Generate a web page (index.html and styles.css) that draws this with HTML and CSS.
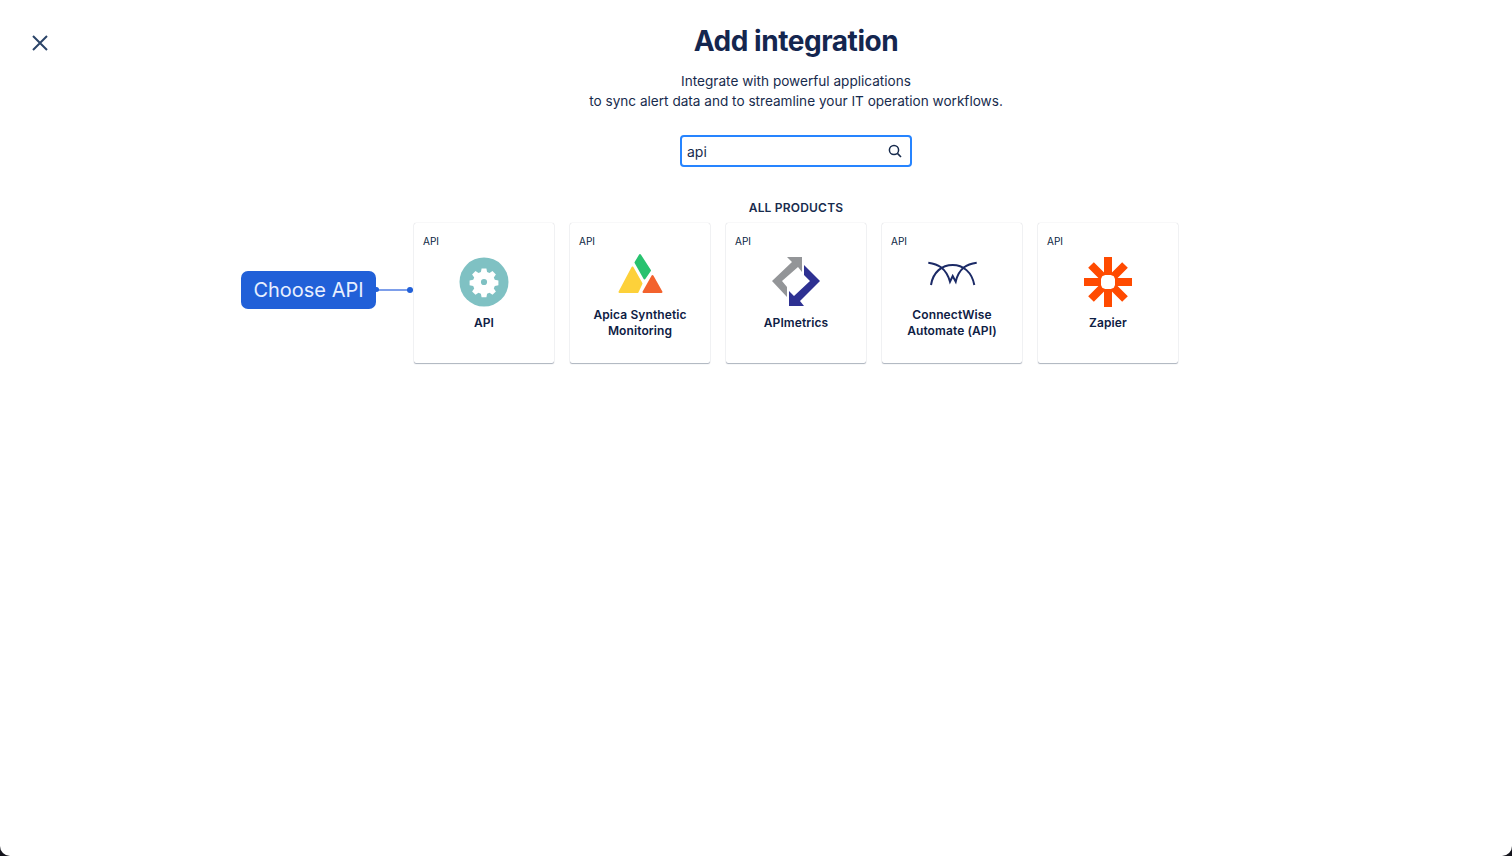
FILE: index.html
```html
<!DOCTYPE html>
<html>
<head>
    <title>Add integration</title>
    <link rel="stylesheet" href="styles.css">
</head>
<body>
    <div class="page">
        <button class="close-btn" aria-label="Close">
            <svg width="18" height="18" viewBox="0 0 18 18"><path d="M2 2 L16 16 M16 2 L2 16" stroke="#2b4468" stroke-width="2" fill="none"/></svg>
        </button>

        <div class="container">
            <h1>Add integration</h1>
            <p class="intro">Integrate with powerful applications<br>to sync alert data and to streamline your IT operation workflows.</p>

            <div class="search-box">
                <span class="search-value">api</span>
                <svg width="16" height="16" viewBox="0 0 16 16"><circle cx="7" cy="7" r="4.6" stroke="#172b4d" stroke-width="1.5" fill="none"/><path d="M10.4 10.4 L14 14" stroke="#172b4d" stroke-width="1.6" fill="none"/></svg>
            </div>

            <h2>ALL PRODUCTS</h2>

            <div class="cards">
                <div class="card">
                    <span class="tag">API</span>
                    <div class="card-icon">
                        <svg width="50" height="50" viewBox="0 0 50 50">
                            <circle cx="25" cy="25" r="24.5" fill="#7fc1c3"/>
                            <path fill="#fff" fill-rule="evenodd" d="M22.6 11.5h4.8l.7 3.6 2.4 1 3-2.1 3.4 3.4-2.1 3 1 2.4 3.6.7v4.8l-3.6.7-1 2.4 2.1 3-3.4 3.4-3-2.1-2.4 1-.7 3.6h-4.8l-.7-3.6-2.4-1-3 2.1-3.4-3.4 2.1-3-1-2.4-3.6-.7v-4.8l3.6-.7 1-2.4-2.1-3 3.4-3.4 3 2.1 2.4-1z M25 21.9a3.1 3.1 0 1 0 0 6.2a3.1 3.1 0 1 0 0-6.2z"/>
                        </svg>
                    </div>
                    <div class="card-name">API</div>
                </div>

                <div class="card">
                    <span class="tag">API</span>
                    <div class="card-icon">
                        <svg width="50" height="50" viewBox="0 0 50 50">
                            <path fill="#28c26f" stroke="#28c26f" stroke-width="2" stroke-linejoin="round" d="M20.5 5.5 L25 -2 L35 13.5 L29.5 21.5 Z"/>
                            <path fill="#fdd13a" stroke="#fdd13a" stroke-width="2" stroke-linejoin="round" d="M17.5 10.5 L26.5 26.5 L22.5 35 L4.5 35 Z"/>
                            <path fill="#f3622d" stroke="#f3622d" stroke-width="2" stroke-linejoin="round" d="M37.5 19 L46.5 35 L28.5 35 Z"/>
                        </svg>
                    </div>
                    <div class="card-name">Apica Synthetic<br>Monitoring</div>
                </div>

                <div class="card">
                    <span class="tag">API</span>
                    <div class="card-icon">
                        <svg width="50" height="50" viewBox="0 0 50 50">
                            <path fill="#939598" d="M16 0 H31 V15 L27 10 L11 24 L16 30 V40 L1 24 L21 5 Z"/>
                            <path fill="#2e3192" d="M33 8 L49 24 L29 44 L33 49 H18 V34 L23 39 L39 24 L33 18 Z"/>
                        </svg>
                    </div>
                    <div class="card-name">APImetrics</div>
                </div>

                <div class="card">
                    <span class="tag">API</span>
                    <div class="card-icon">
                        <svg width="50" height="50" viewBox="0 0 50 50">
                            <g fill="none" stroke="#1b2a66" stroke-width="2">
                                <path d="M1.3 5.7 C11 7 19 11 23 24.7 L25.7 19 L28.7 24.7 C32 11 40 7 49.7 5.7"/>
                                <path d="M4 28 C6 15 15 8 25.7 8 C36 8 45 15 47.3 28"/>
                            </g>
                        </svg>
                    </div>
                    <div class="card-name">ConnectWise<br>Automate (API)</div>
                </div>

                <div class="card">
                    <span class="tag">API</span>
                    <div class="card-icon">
                        <svg width="50" height="50" viewBox="0 0 50 50">
                            <g stroke="#ff4a00" stroke-width="8">
                                <path d="M25 0 V18 M25 32 V50 M1 25 H18 M32 25 H49"/>
                                <path d="M8 8 L20 20 M30 30 L42 42 M42 8 L30 20 M20 30 L8 42"/>
                            </g>
                            <rect x="18.5" y="18.5" width="13" height="13" rx="3" fill="#fff"/>
                        </svg>
                    </div>
                    <div class="card-name">Zapier</div>
                </div>
            </div>
        </div>

        <div class="callout">
            <div class="callout-label">Choose API</div>
            <div class="callout-line"></div>
        </div>
    </div>
</body>
</html>
```

FILE: styles.css
```css
html, body {
    height: 100%;
}
body {
    margin: 0;
    background-color: #14141c;
    font-family: Inter, "Liberation Sans", sans-serif;
    color: #172b4d;
}
.page {
    position: relative;
    box-sizing: border-box;
    height: 856px;
    padding-left: 80px;
    background-color: #fff;
    border-radius: 0 0 10px 10px;
    overflow: hidden;
}
.close-btn {
    position: absolute;
    top: 34px;
    left: 31px;
    width: 18px;
    height: 18px;
    padding: 0;
    border: none;
    background: none;
    cursor: pointer;
}
.close-btn svg {
    display: block;
}
.container {
    display: flex;
    flex-direction: column;
    align-items: center;
}
h1 {
    margin: 24px 0 0;
    font-size: 28px;
    line-height: 34px;
    font-weight: 700;
    letter-spacing: -0.45px;
    color: #14264f;
}
.intro {
    margin: 13px 0 0;
    font-size: 13.6px;
    line-height: 20px;
    text-align: center;
}
.search-box {
    display: flex;
    align-items: center;
    justify-content: space-between;
    box-sizing: border-box;
    width: 232px;
    height: 32px;
    margin-top: 24px;
    padding: 0 7px 0 5px;
    border: 2px solid #2684ff;
    border-radius: 4px;
}
.search-value {
    font-size: 14px;
}
h2 {
    margin: 33px 0 0;
    font-size: 12px;
    line-height: 16px;
    font-weight: 600;
    letter-spacing: 0.2px;
}
.cards {
    display: flex;
    gap: 16px;
    margin-top: 7px;
}
.card {
    position: relative;
    box-sizing: border-box;
    width: 140px;
    height: 140px;
    padding-top: 34px;
    background-color: #fff;
    border-radius: 2px;
    box-shadow: 0 1px 1px rgba(9, 30, 66, 0.32), 0 0 1px rgba(9, 30, 66, 0.28);
    text-align: center;
}
.tag {
    position: absolute;
    top: 12px;
    left: 9px;
    font-size: 10px;
    line-height: 12px;
    color: #091e42;
}
.card-icon {
    height: 50px;
}
.card-icon svg {
    display: block;
    margin: 0 auto;
    overflow: visible;
}
.card-name {
    display: flex;
    align-items: center;
    justify-content: center;
    height: 32px;
    font-size: 12px;
    line-height: 16px;
    font-weight: 600;
    letter-spacing: 0.1px;
    color: #0e2044;
}
.callout {
    position: absolute;
    top: 271px;
    left: 241px;
    display: flex;
    align-items: center;
}
.callout-label {
    width: 135px;
    height: 38px;
    background-color: #2160d8;
    border-radius: 7px;
    color: #e8efff;
    font-size: 20px;
    line-height: 38px;
    text-align: center;
}
.callout-line {
    position: relative;
    width: 37px;
    height: 2px;
    background-color: #7d9eea;
}
.callout-line::before,
.callout-line::after {
    content: "";
    position: absolute;
    top: -2px;
    background-color: #2160d8;
    border-radius: 50%;
}
.callout-line::before {
    left: -2px;
    width: 5px;
    height: 5px;
}
.callout-line::after {
    right: 0;
    width: 6px;
    height: 6px;
}
```
